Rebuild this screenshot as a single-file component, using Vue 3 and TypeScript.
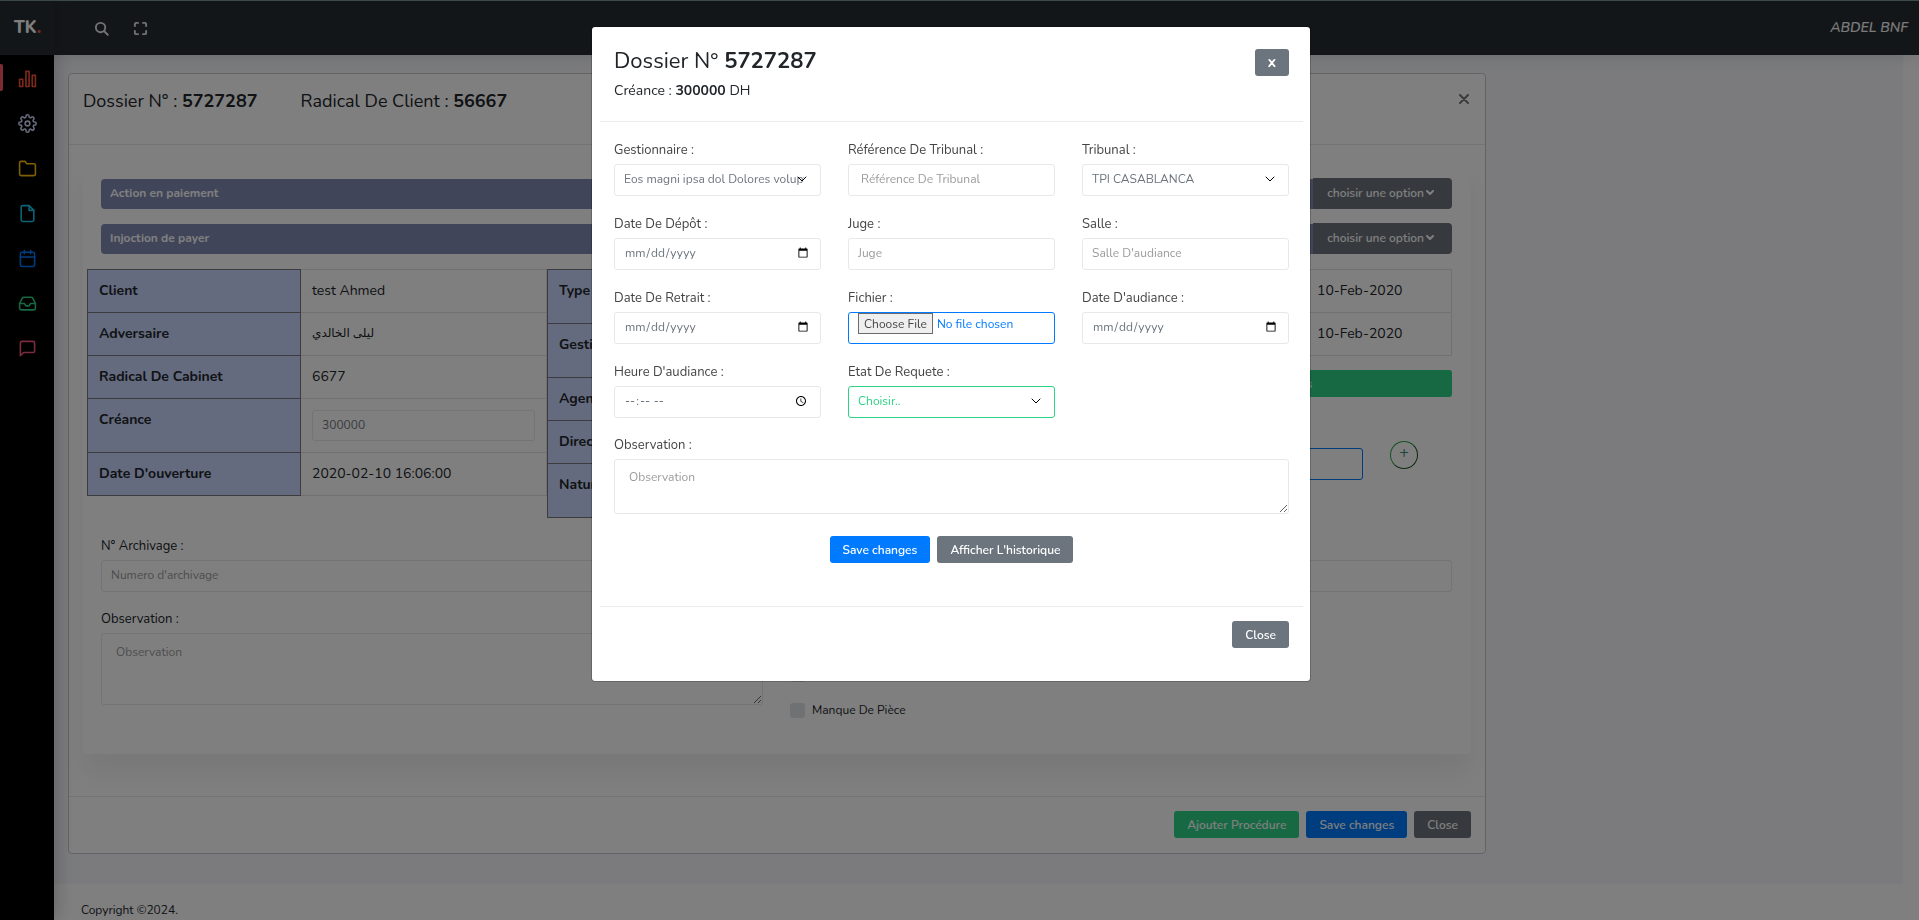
<script setup lang="ts">
import { ref } from 'vue'

interface NavItem {
  name: string
  tone: string
  paths: string[]
}

interface Row {
  label: string
  value: string
  size?: string
  field?: boolean
  rtl?: boolean
}

interface Field {
  id: string
  label: string
  kind: 'select' | 'text' | 'date' | 'time' | 'file'
  hint?: string
  tone?: string
  wide?: boolean
}

const nav: NavItem[] = [
  { name: 'Tableau de bord', tone: 'red', paths: ['M2 13h4v9H2z', 'M10 3h4v19h-4z', 'M18 8h4v14h-4z'] },
  {
    name: 'Paramètres',
    tone: 'pale',
    paths: [
      'M12 9a3 3 0 1 0 0 6 3 3 0 0 0 0-6z',
      'M19.4 15a1.65 1.65 0 0 0 .33 1.82l.06.06a2 2 0 0 1-2.83 2.83l-.06-.06a1.65 1.65 0 0 0-2.8 1.17V21a2 2 0 0 1-4 0v-.09A1.65 1.65 0 0 0 7.1 19.7l-.06.06a2 2 0 0 1-2.83-2.83l.06-.06A1.65 1.65 0 0 0 3.1 14H3a2 2 0 0 1 0-4h.09A1.65 1.65 0 0 0 4.3 7.1l-.06-.06a2 2 0 0 1 2.83-2.83l.06.06A1.65 1.65 0 0 0 10 3.1V3a2 2 0 0 1 4 0v.09a1.65 1.65 0 0 0 2.8 1.17l.06-.06a2 2 0 0 1 2.83 2.83l-.06.06A1.65 1.65 0 0 0 20.9 10H21a2 2 0 0 1 0 4h-.09a1.65 1.65 0 0 0-1.51 1z',
    ],
  },
  { name: 'Dossiers', tone: 'amber', paths: ['M22 19a2 2 0 0 1-2 2H4a2 2 0 0 1-2-2V5a2 2 0 0 1 2-2h5l2 3h9a2 2 0 0 1 2 2z'] },
  { name: 'Documents', tone: 'cyan', paths: ['M14 2H6a2 2 0 0 0-2 2v16a2 2 0 0 0 2 2h12a2 2 0 0 0 2-2V8z', 'M14 2v6h6'] },
  { name: 'Agenda', tone: 'blue', paths: ['M5 4h14a2 2 0 0 1 2 2v14a2 2 0 0 1-2 2H5a2 2 0 0 1-2-2V6a2 2 0 0 1 2-2z', 'M16 2v4', 'M8 2v4', 'M3 10h18'] },
  {
    name: 'Boîte de réception',
    tone: 'green',
    paths: [
      'M22 12h-6l-2 3h-4l-2-3H2',
      'M5.45 5.11L2 12v6a2 2 0 0 0 2 2h16a2 2 0 0 0 2-2v-6l-3.45-6.89A2 2 0 0 0 16.76 4H7.24a2 2 0 0 0-1.79 1.11z',
    ],
  },
  { name: 'Messages', tone: 'pink', paths: ['M21 15a2 2 0 0 1-2 2H7l-4 4V5a2 2 0 0 1 2-2h14a2 2 0 0 1 2 2z'] },
]

const actions = ['Action en paiement', 'Injoction de payer']

const clientRows: Row[] = [
  { label: 'Client', value: 'test Ahmed' },
  { label: 'Adversaire', value: 'ليلى الخالدي', rtl: true },
  { label: 'Radical De Cabinet', value: '6677' },
  { label: 'Créance', value: '300000', field: true },
  { label: "Date D'ouverture", value: '2020-02-10 16:06:00' },
]

const caseRows: Row[] = [
  { label: 'Type', value: '', size: 'tall' },
  { label: 'Gestionnaire', value: '', size: 'tall' },
  { label: 'Agence', value: '' },
  { label: 'Directeur', value: '' },
  { label: 'Nature', value: '', size: 'tall' },
]

const dateRows: Row[] = [
  { label: 'Date Création', value: '10-Feb-2020' },
  { label: 'Date Validation', value: '10-Feb-2020' },
]

const fields: Field[] = [
  { id: 'gestionnaire', label: 'Gestionnaire :', kind: 'select', hint: 'Eos magni ipsa dol Dolores voluptas' },
  { id: 'reference', label: 'Référence De Tribunal :', kind: 'text', hint: 'Référence De Tribunal', wide: true },
  { id: 'tribunal', label: 'Tribunal :', kind: 'select', hint: 'TPI CASABLANCA' },
  { id: 'depot', label: 'Date De Dépôt :', kind: 'date' },
  { id: 'juge', label: 'Juge :', kind: 'text', hint: 'Juge' },
  { id: 'salle', label: 'Salle :', kind: 'text', hint: "Salle D'audiance" },
  { id: 'retrait', label: 'Date De Retrait :', kind: 'date' },
  { id: 'fichier', label: 'Fichier :', kind: 'file' },
  { id: 'audiance', label: "Date D'audiance :", kind: 'date' },
  { id: 'heure', label: "Heure D'audiance :", kind: 'time' },
  { id: 'etat', label: 'Etat De Requete :', kind: 'select', hint: 'Choisir..', tone: 'success' },
]

const open = ref(true)
const creance = ref('300000')
</script>

<template>
  <div class="app">
    <header class="topbar">
      <a class="brand" href="#">TK<span>.</span></a>
      <div class="tools">
        <button type="button" aria-label="Rechercher">
          <svg viewBox="0 0 24 24"><circle cx="10.5" cy="10.5" r="7.5" /><path d="M16 16l6 6" /></svg>
        </button>
        <button type="button" aria-label="Plein écran">
          <svg viewBox="0 0 24 24">
            <path d="M8 3H5a2 2 0 0 0-2 2v3M16 3h3a2 2 0 0 1 2 2v3M21 16v3a2 2 0 0 1-2 2h-3M3 16v3a2 2 0 0 0 2 2h3" />
          </svg>
        </button>
      </div>
      <a class="user" href="#">ABDEL BNF</a>
    </header>

    <div class="shell">
      <nav class="sidebar">
        <a v-for="(item, i) in nav" :key="item.name" href="#" :aria-label="item.name" :class="[item.tone, { active: i === 0 }]">
          <svg viewBox="0 0 24 24"><path v-for="d in item.paths" :key="d" :d="d" /></svg>
        </a>
      </nav>

      <div class="page">
        <main class="content">
          <section class="card">
            <div class="card-head">
              <h1>Dossier N° : <b>5727287</b></h1>
              <h1>Radical De Client : <b>56667</b></h1>
              <button type="button" class="dismiss" aria-label="Fermer">
                <svg viewBox="0 0 10 10"><path d="M1 1l8 8M9 1l-8 8" /></svg>
              </button>
            </div>

            <div class="panel">
              <div v-for="name in actions" :key="name" class="action">
                <div class="bar">{{ name }}</div>
                <button type="button">
                  choisir une option
                  <svg viewBox="0 0 8 6"><path d="M1 1l3 3 3-3" /></svg>
                </button>
              </div>

              <div class="tables">
                <table>
                  <tbody>
                    <tr v-for="row in clientRows" :key="row.label">
                      <th scope="row">{{ row.label }}</th>
                      <td v-if="row.field"><input v-model="creance" class="control" type="text" :aria-label="row.label" /></td>
                      <td v-else-if="row.rtl"><span class="arabic" dir="rtl" lang="ar">{{ row.value }}</span></td>
                      <td v-else>{{ row.value }}</td>
                    </tr>
                  </tbody>
                </table>
                <table>
                  <tbody>
                    <tr v-for="row in caseRows" :key="row.label" :class="row.size">
                      <th scope="row">{{ row.label }}</th>
                      <td>{{ row.value }}</td>
                    </tr>
                  </tbody>
                </table>
                <div class="side">
                  <table class="plain">
                    <tbody>
                      <tr v-for="row in dateRows" :key="row.label">
                        <th scope="row">{{ row.label }}</th>
                        <td>{{ row.value }}</td>
                      </tr>
                    </tbody>
                  </table>
                  <button type="button" class="btn success block">Imprimer Tous Les Documents</button>
                  <div class="attach">
                    <input class="control primary" type="text" aria-label="Pièce jointe" />
                    <button type="button" class="plus" aria-label="Ajouter">+</button>
                  </div>
                </div>
              </div>

              <div class="field">
                <label for="archivage">N° Archivage :</label>
                <input id="archivage" class="control" type="text" placeholder="Numero d'archivage" />
              </div>
              <div class="notes">
                <div class="field">
                  <label for="note">Observation :</label>
                  <textarea id="note" class="control tall" placeholder="Observation"></textarea>
                </div>
                <div class="checks">
                  <label><input type="checkbox" />Archivé</label>
                  <label><input type="checkbox" />Manque De Pièce</label>
                </div>
              </div>
            </div>

            <div class="card-foot">
              <button type="button" class="btn success">Ajouter Procédure</button>
              <button type="button" class="btn primary">Save changes</button>
              <button type="button" class="btn">Close</button>
            </div>
          </section>
        </main>
        <footer class="footer">Copyright ©2024.</footer>
      </div>
    </div>

    <div v-if="open" class="backdrop">
      <div class="modal" role="dialog" aria-modal="true" aria-labelledby="modal-title">
        <div class="modal-head">
          <div>
            <h2 id="modal-title">Dossier N° <b>5727287</b></h2>
            <p>Créance : <b>{{ creance }}</b> DH</p>
          </div>
          <button type="button" class="btn" @click="open = false">X</button>
        </div>

        <form class="modal-body" @submit.prevent>
          <div class="fields">
            <div v-for="f in fields" :key="f.id" class="field">
              <label :for="f.id">{{ f.label }}</label>
              <div v-if="f.kind === 'select'" class="picker">
                <select :id="f.id" class="control" :class="f.tone">
                  <option>{{ f.hint }}</option>
                </select>
                <svg viewBox="0 0 10 6"><path d="M1 1l4 4 4-4" /></svg>
              </div>
              <input v-else :id="f.id" class="control" :class="{ inset: f.wide }" :type="f.kind" :placeholder="f.hint" />
            </div>
          </div>
          <div class="field">
            <label for="observation">Observation :</label>
            <textarea id="observation" class="control" placeholder="Observation"></textarea>
          </div>
          <div class="submit">
            <button type="submit" class="btn primary">Save changes</button>
            <button type="button" class="btn">Afficher L'historique</button>
          </div>
        </form>

        <div class="modal-foot">
          <button type="button" class="btn" @click="open = false">Close</button>
        </div>
      </div>
    </div>
  </div>
</template>

<style>
body {
  margin: 0;
  background: #fff;
  overflow: hidden;
}
</style>

<style scoped>
* {
  box-sizing: border-box;
}

.app {
  display: flex;
  flex-direction: column;
  height: 100vh;
  overflow: hidden;
  font: 400 14px/20px Nunito, 'Open Sans', 'DejaVu Sans', sans-serif;
  color: #212529;
}

button,
input,
select,
textarea {
  font: inherit;
}

button {
  cursor: pointer;
  white-space: nowrap;
}

a {
  text-decoration: none;
}

h1,
h2,
p {
  margin: 0;
  font-weight: 400;
}

b {
  font-weight: 700;
}

svg {
  display: block;
  fill: none;
  stroke: currentColor;
  stroke-width: 2;
  stroke-linecap: round;
  stroke-linejoin: round;
}

/* top bar */
.topbar {
  display: flex;
  align-items: center;
  flex: none;
  height: 55px;
  border-top: 1px solid #7a9498;
  background: #272c33;
  color: #e4e4e4;
  position: relative;
  z-index: 2;
  box-shadow: 0 0 16px rgba(0, 0, 0, 0.15);
}

.brand {
  width: 54px;
  line-height: 54px;
  padding-left: 14px;
  font-size: 17px;
  font-weight: 800;
  color: #fff;
  box-shadow: 4px 0 10px rgba(0, 0, 0, 0.12);
}

.brand span {
  color: #ef4f4f;
}

.tools {
  display: flex;
  gap: 24px;
  flex: 1;
  padding-left: 40px;
}

.tools button {
  padding: 0;
  border: 0;
  background: none;
  color: inherit;
}

.tools svg {
  width: 15px;
  height: 15px;
  stroke-width: 3;
}

.user {
  padding-right: 11px;
  font-style: italic;
  font-weight: 600;
  color: #f4f4f4;
}

/* layout */
.shell {
  display: flex;
  flex: 1;
  min-height: 0;
}

.sidebar {
  flex: none;
  width: 54px;
  padding-top: 1px;
  background: #000;
  position: relative;
  z-index: 1;
  box-shadow: 4px 0 16px rgba(0, 0, 0, 0.18);
}

.sidebar a {
  display: flex;
  align-items: center;
  justify-content: center;
  height: 45px;
  position: relative;
}

.sidebar .active::before {
  content: '';
  position: absolute;
  left: 0;
  top: 8px;
  width: 3px;
  height: 27px;
  background: #f8576b;
  border-radius: 0 2px 2px 0;
}

.sidebar svg {
  width: 19px;
  height: 19px;
}

.red { color: #ff5533; }
.pale { color: #cdd6f6; }
.amber { color: #ffc107; }
.cyan { color: #17c8ea; }
.blue { color: #007bff; }
.green { color: #2dd285; }
.pink { color: #f8577d; }

.page {
  flex: 1;
  min-width: 0;
  margin-right: 16px;
}

.content {
  padding: 18px 14px 30px;
  background: #f6f7fb;
}

.footer {
  padding: 16px 27px;
  font-size: 12px;
}

/* case card */
.card {
  max-width: 1418px;
  border: 1px solid #c4c8cc;
  border-radius: 4px;
  background: #fff;
}

.card-head {
  display: flex;
  gap: 43px;
  padding: 14px 14px 30px;
  border-bottom: 1px solid #e6e8ea;
}

.card-head h1 {
  font-size: 18px;
  line-height: 26px;
}

.dismiss {
  display: grid;
  place-items: center;
  width: 14px;
  height: 22px;
  margin-left: auto;
  padding: 0;
  border: 0;
  background: none;
  color: #777;
}

.dismiss svg {
  width: 10px;
  height: 10px;
  stroke-width: 2;
}

.panel {
  margin: 14px 14px 42px;
  padding: 19px 19px 34px 18px;
  border-radius: 4px;
  box-shadow: 0 20px 27px rgba(0, 0, 0, 0.06);
}

.action {
  display: flex;
  align-items: center;
  margin-bottom: 14px;
  font-size: 12px;
  font-weight: 700;
  color: #fff;
}

.bar {
  flex: 1;
  padding: 4px 9px 6px;
  border-radius: 4px 0 0 4px;
  background: #838bb5;
}

.action button {
  display: flex;
  align-items: center;
  gap: 2px;
  height: 31px;
  padding: 0 18px 2px 14px;
  border: 0;
  border-radius: 0 4px 4px 0;
  background: #6c757d;
  color: inherit;
  font-weight: 600;
}

.action svg {
  width: 8px;
  height: 6px;
}

.tables {
  display: grid;
  grid-template-columns: repeat(3, 1fr);
  margin: 15px -15px 18px -14px;
  align-items: start;
}

.side {
  padding-right: 15px;
}

table {
  width: 100%;
  border-collapse: collapse;
  table-layout: fixed;
}

th,
td {
  height: 43px;
  padding: 11px;
  border: 1px solid #e0e2e4;
  text-align: left;
  vertical-align: top;
}

th {
  width: 213px;
  border-color: #78797e;
  background: #cad6fe;
  font-weight: 700;
}

.arabic {
  display: inline-block;
  font-size: 12px;
  line-height: 18px;
  vertical-align: top;
}

.tall th,
.tall td {
  height: 54px;
}

td .control {
  height: 31px;
}

.plain th {
  width: auto;
}

.plain td {
  width: 146px;
}

.block {
  width: 100%;
  margin: 14px 0 44px;
}

.attach {
  display: flex;
  align-items: flex-start;
  gap: 27px;
  padding-right: 34px;
}

.attach .control {
  margin-top: 7px;
}

.plus {
  flex: none;
  width: 28px;
  height: 28px;
  padding: 0 0 4px;
  border: 1px outset #28a745;
  border-radius: 50%;
  background: none;
  color: #3d8a78;
  font-size: 16px;
  line-height: 20px;
}

.field label {
  display: block;
  margin-bottom: 4px;
  font-size: 13px;
}

.notes {
  display: grid;
  grid-template-columns: 1fr 1fr;
  gap: 27px;
  margin-top: 17px;
}

.checks {
  display: flex;
  flex-direction: column;
  gap: 16px;
  padding-top: 55px;
}

.checks label {
  display: flex;
  align-items: center;
  gap: 7px;
  font-size: 12px;
}

.checks input {
  appearance: none;
  width: 15px;
  height: 15px;
  margin: 0;
  border-radius: 3px;
  background: #dee2e6;
}

.card-foot {
  display: flex;
  justify-content: flex-end;
  gap: 7px;
  padding: 14px 14px 15px;
  border-top: 1px solid #e6e8ea;
}

/* controls */
.control {
  display: block;
  width: 100%;
  height: 32px;
  padding: 0 9px 2px;
  border: 1px solid #e6e8ea;
  border-radius: 3px;
  outline: 0;
  background: transparent;
  font-size: 12px;
  color: #6c757d;
}

.control::placeholder {
  color: #9b9b9b;
}

.inset {
  padding: 0 12px 2px;
}

.control.primary {
  border-color: #007bff;
}

textarea.control {
  height: 55px;
  padding: 7px 14px;
}

textarea.tall {
  height: 72px;
  padding-top: 8px;
}

.btn {
  height: 27px;
  padding: 1px 13px 0;
  border: 0;
  border-radius: 3px;
  background: #6c757d;
  color: #fff;
  font-size: 12px;
  font-weight: 600;
}

.btn.primary {
  background: #007bff;
}

.btn.success {
  background: #2dd285;
}

/* dialog */
.backdrop {
  position: fixed;
  inset: 0;
  z-index: 10;
  padding: 26px 17px 0 0;
  background: rgba(0, 0, 0, 0.5);
}

.modal {
  max-width: 720px;
  margin: 0 auto;
  padding: 8px 7px 8px 8px;
  border: 1px solid rgba(0, 0, 0, 0.2);
  border-radius: 4px;
  background: #fff;
  background-clip: padding-box;
}

.modal-head {
  display: flex;
  justify-content: space-between;
  align-items: flex-start;
  padding: 14px 14px 20px;
  border-bottom: 1px solid #e9ecef;
}

.modal-head h2 {
  font-size: 22px;
  line-height: 24px;
}

.modal-head p {
  margin-top: 8px;
}

.modal-head .btn {
  font-weight: 800;
}

.modal-body {
  padding: 18px 14px 43px;
  color: #444;
}

.fields {
  display: grid;
  grid-template-columns: repeat(3, 1fr);
  gap: 18px 27px;
  margin-bottom: 17px;
}

.picker {
  position: relative;
}

.picker select {
  appearance: none;
  padding-right: 16px;
}

.picker svg {
  position: absolute;
  right: 14px;
  top: 12px;
  width: 10px;
  height: 6px;
  color: #000;
  pointer-events: none;
}

.picker path {
  stroke-width: 1;
}

select.success {
  border-color: #2dd285;
  color: #2dd285;
}

input[type='file'] {
  border-color: #007bff;
  color: #007bff;
}

input[type='file']::file-selector-button {
  height: 21px;
  margin: 0 4px 0 0;
  padding: 0 5px;
  border: 1px solid #6b6b6b;
  border-radius: 0;
  background: #efefef;
  color: #444;
  font: inherit;
}

.submit {
  display: flex;
  justify-content: center;
  gap: 7px;
  margin-top: 22px;
}

.modal-foot {
  display: flex;
  justify-content: flex-end;
  padding: 14px 14px 25px;
  border-top: 1px solid #e9ecef;
}
</style>
